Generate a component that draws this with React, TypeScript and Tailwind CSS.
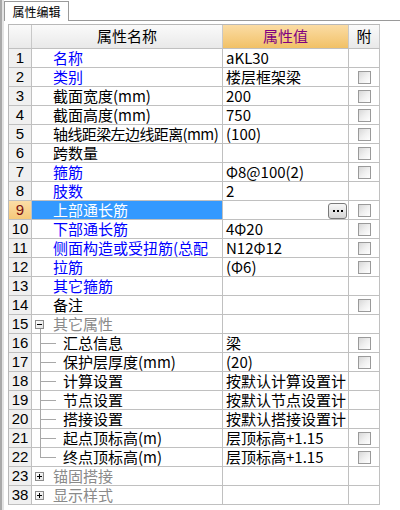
import React from "react";

type Row = {
  n: string;
  name: string;
  value?: string;
  blue?: boolean;
  check?: boolean;
  tight?: boolean;
  kind?: "normal" | "groupOpen" | "groupClosed" | "child" | "childLast";
  selected?: boolean;
};

const rows: Row[] = [
  { n: "1", name: "名称", value: "aKL30", blue: true },
  { n: "2", name: "类别", value: "楼层框架梁", blue: true, check: true },
  { n: "3", name: "截面宽度(mm)", value: "200", check: true },
  { n: "4", name: "截面高度(mm)", value: "750", check: true },
  { n: "5", name: "轴线距梁左边线距离(mm)", value: "(100)", check: true, tight: true },
  { n: "6", name: "跨数量", value: "", check: true },
  { n: "7", name: "箍筋", value: "Φ8@100(2)", blue: true, check: true },
  { n: "8", name: "肢数", value: "2", blue: true },
  { n: "9", name: "上部通长筋", value: "", blue: true, check: true, selected: true },
  { n: "10", name: "下部通长筋", value: "4Φ20", blue: true, check: true },
  { n: "11", name: "侧面构造或受扭筋(总配", value: "N12Φ12", blue: true, check: true },
  { n: "12", name: "拉筋", value: "(Φ6)", blue: true, check: true },
  { n: "13", name: "其它箍筋", value: "", blue: true },
  { n: "14", name: "备注", value: "", check: true },
  { n: "15", name: "其它属性", kind: "groupOpen" },
  { n: "16", name: "汇总信息", value: "梁", kind: "child", check: true },
  { n: "17", name: "保护层厚度(mm)", value: "(20)", kind: "child", check: true },
  { n: "18", name: "计算设置", value: "按默认计算设置计", kind: "child" },
  { n: "19", name: "节点设置", value: "按默认节点设置计", kind: "child" },
  { n: "20", name: "搭接设置", value: "按默认搭接设置计", kind: "child" },
  { n: "21", name: "起点顶标高(m)", value: "层顶标高+1.15", kind: "child", check: true },
  { n: "22", name: "终点顶标高(m)", value: "层顶标高+1.15", kind: "childLast", check: true },
  { n: "23", name: "锚固搭接", kind: "groupClosed" },
  { n: "38", name: "显示样式", kind: "groupClosed" },
];

function CheckBox() {
  return (
    <div className="w-[13px] h-[13px] border border-[#9a9a9a] bg-gradient-to-br from-[#d8d8d8] via-[#efefef] to-[#ffffff]" />
  );
}

function ExpandBox({ open }: { open: boolean }) {
  return (
    <div className="relative w-[9px] h-[9px] border border-[#8c8c8c] bg-gradient-to-br from-[#ffffff] to-[#e2e2e2]">
      <div className="absolute left-[1px] top-[3px] w-[5px] h-[1px] bg-black" />
      {!open && <div className="absolute left-[3px] top-[1px] w-[1px] h-[5px] bg-black" />}
    </div>
  );
}

function NameCell({ r }: { r: Row }) {
  const kind = r.kind ?? "normal";
  if (kind === "groupOpen" || kind === "groupClosed") {
    return (
      <div className="relative w-[191px] h-full flex items-center border-r border-[#c0c0c0]">
        <div className="ml-[3px]">
          <ExpandBox open={kind === "groupOpen"} />
        </div>
        {kind === "groupOpen" && (
          <div className="absolute left-[8px] top-[14px] w-[1px] h-[5px] bg-[#a8a8a8]" />
        )}
        <span className="ml-[9px] text-[#8a8a8a] whitespace-nowrap">{r.name}</span>
      </div>
    );
  }
  if (kind === "child" || kind === "childLast") {
    return (
      <div className="relative w-[191px] h-full flex items-center border-r border-[#c0c0c0]">
        <div
          className={
            kind === "child"
              ? "absolute left-[8px] top-0 w-[1px] h-[19px] bg-[#a8a8a8]"
              : "absolute left-[8px] top-0 w-[1px] h-[9px] bg-[#a8a8a8]"
          }
        />
        <div className="absolute left-[8px] top-[9px] w-[16px] h-[1px] bg-[#a8a8a8]" />
        <span className="ml-[31px] text-black whitespace-nowrap">{r.name}</span>
      </div>
    );
  }
  return (
    <div
      className={
        r.selected
          ? "w-[191px] h-full flex items-center border-r border-[#c0c0c0] bg-[#3399ff]"
          : "w-[191px] h-full flex items-center border-r border-[#c0c0c0]"
      }
    >
      <span
        className={
          (r.tight ? "tracking-[-0.6px] " : "") +
          (r.selected
            ? "ml-[21px] text-white whitespace-nowrap"
            : r.blue
            ? "ml-[21px] text-[#0000ff] whitespace-nowrap"
            : "ml-[21px] text-black whitespace-nowrap")
        }
      >
        {r.name}
      </span>
    </div>
  );
}

function GridRow({ r }: { r: Row }) {
  return (
    <div className="flex h-[19px] border-b border-[#c0c0c0] leading-[18px]">
      <div
        className={
          r.selected
            ? "w-[23px] h-full border-r border-[#c0c0c0] bg-gradient-to-b from-[#fbdda6] to-[#f5c97a] flex items-center justify-center text-[#7a1010] font-['Liberation_Sans',sans-serif] text-[15px]"
            : "w-[23px] h-full border-r border-[#c0c0c0] bg-[#f0f0f0] flex items-center justify-center text-black font-['Liberation_Sans',sans-serif] text-[15px]"
        }
      >
        {r.n}
      </div>
      <NameCell r={r} />
      <div className="relative w-[126px] h-full flex items-center border-r border-[#c0c0c0]">
        <span className="ml-[3px] whitespace-nowrap text-black">{r.value}</span>
        {r.selected && (
          <div className="absolute right-[1px] top-[2px] w-[19px] h-[16px] rounded-[3px] border border-[#7a7a7a] bg-gradient-to-b from-[#f7f7f7] to-[#d6d6d6] flex items-center justify-center gap-[2px]">
            <div className="w-[2px] h-[2px] bg-black" />
            <div className="w-[2px] h-[2px] bg-black" />
            <div className="w-[2px] h-[2px] bg-black" />
          </div>
        )}
      </div>
      <div className="w-[31px] h-full border-r border-[#c0c0c0] flex items-center justify-center">
        {r.check && <CheckBox />}
      </div>
    </div>
  );
}

export default function App() {
  return (
    <div className="relative w-[400px] h-[510px] bg-white overflow-hidden font-['Noto_Sans_CJK_SC',sans-serif] text-[15px] flex">
      <div className="w-[2px] h-full bg-[#a9a9a9]" />
      <div className="w-[2px] h-full bg-[#e3e3e3]" />
      <div className="flex-1 flex flex-col">
        <div className="flex h-[21px] items-end">
          <div className="w-[65px] h-[20px] border border-b-0 border-[#9a9a9a] bg-white flex items-center justify-center text-[12px] text-black leading-none">
            属性编辑
          </div>
          <div className="flex-1 h-[1px] bg-[#9a9a9a]" />
        </div>
        <div className="pl-[4px] pt-[3px]">
          <div className="w-[372px] border-l border-t border-[#b8b8b8]">
            <div className="flex h-[24px] border-b border-[#c0c0c0]">
              <div className="w-[23px] h-full border-r border-[#c8c8c8] bg-gradient-to-b from-[#fafafa] to-[#e9e9e9]" />
              <div className="w-[191px] h-full border-r border-[#c8c8c8] bg-gradient-to-b from-[#fafafa] to-[#e9e9e9] flex items-center justify-center text-[15px] text-black">
                属性名称
              </div>
              <div className="w-[126px] h-full border-r border-[#c8c8c8] bg-gradient-to-b from-[#fbdca3] to-[#f1c166] flex items-center justify-center text-[15px] text-[#800080]">
                属性值
              </div>
              <div className="w-[31px] h-full border-r border-[#c8c8c8] bg-gradient-to-b from-[#fafafa] to-[#e9e9e9] flex items-center justify-center text-[15px] text-black">
                附
              </div>
            </div>
            {rows.map((r) => (
              <GridRow key={r.n} r={r} />
            ))}
          </div>
        </div>
      </div>
    </div>
  );
}
